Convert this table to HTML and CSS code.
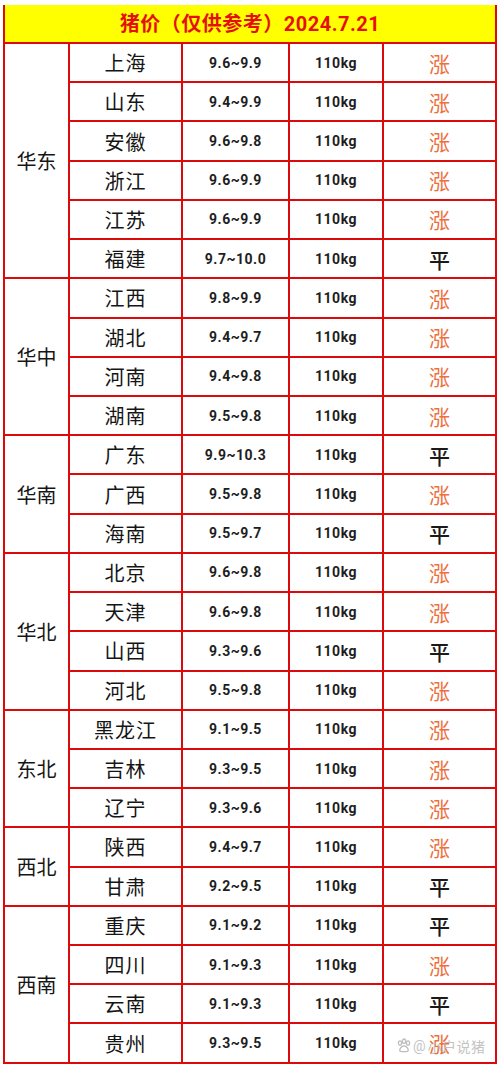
FILE: index.html
```html
<!DOCTYPE html>
<html lang="zh">
<head>
<meta charset="utf-8">
<link rel="stylesheet" href="styles.css">
</head>
<body>
<div class="page">
<table class="price">
<colgroup>
<col class="c1"><col class="c2"><col class="c3"><col class="c4"><col class="c5">
</colgroup>
<thead>
<tr><th colspan="5" class="title">猪价（仅供参考）2024.7.21</th></tr>
</thead>
<tbody>
<tr><td rowspan="6" class="grp">华东</td><td class="pv">上海</td><td class="num">9.6~9.9</td><td class="num">110kg</td><td class="up">涨</td></tr>
<tr><td class="pv">山东</td><td class="num">9.4~9.9</td><td class="num">110kg</td><td class="up">涨</td></tr>
<tr><td class="pv">安徽</td><td class="num">9.6~9.8</td><td class="num">110kg</td><td class="up">涨</td></tr>
<tr><td class="pv">浙江</td><td class="num">9.6~9.9</td><td class="num">110kg</td><td class="up">涨</td></tr>
<tr><td class="pv">江苏</td><td class="num">9.6~9.9</td><td class="num">110kg</td><td class="up">涨</td></tr>
<tr><td class="pv">福建</td><td class="num">9.7~10.0</td><td class="num">110kg</td><td class="flat">平</td></tr>

<tr><td rowspan="4" class="grp">华中</td><td class="pv">江西</td><td class="num">9.8~9.9</td><td class="num">110kg</td><td class="up">涨</td></tr>
<tr><td class="pv">湖北</td><td class="num">9.4~9.7</td><td class="num">110kg</td><td class="up">涨</td></tr>
<tr><td class="pv">河南</td><td class="num">9.4~9.8</td><td class="num">110kg</td><td class="up">涨</td></tr>
<tr><td class="pv">湖南</td><td class="num">9.5~9.8</td><td class="num">110kg</td><td class="up">涨</td></tr>

<tr><td rowspan="3" class="grp">华南</td><td class="pv">广东</td><td class="num">9.9~10.3</td><td class="num">110kg</td><td class="flat">平</td></tr>
<tr><td class="pv">广西</td><td class="num">9.5~9.8</td><td class="num">110kg</td><td class="up">涨</td></tr>
<tr><td class="pv">海南</td><td class="num">9.5~9.7</td><td class="num">110kg</td><td class="flat">平</td></tr>

<tr><td rowspan="4" class="grp">华北</td><td class="pv">北京</td><td class="num">9.6~9.8</td><td class="num">110kg</td><td class="up">涨</td></tr>
<tr><td class="pv">天津</td><td class="num">9.6~9.8</td><td class="num">110kg</td><td class="up">涨</td></tr>
<tr><td class="pv">山西</td><td class="num">9.3~9.6</td><td class="num">110kg</td><td class="flat">平</td></tr>
<tr><td class="pv">河北</td><td class="num">9.5~9.8</td><td class="num">110kg</td><td class="up">涨</td></tr>

<tr><td rowspan="3" class="grp">东北</td><td class="pv">黑龙江</td><td class="num">9.1~9.5</td><td class="num">110kg</td><td class="up">涨</td></tr>
<tr><td class="pv">吉林</td><td class="num">9.3~9.5</td><td class="num">110kg</td><td class="up">涨</td></tr>
<tr><td class="pv">辽宁</td><td class="num">9.3~9.6</td><td class="num">110kg</td><td class="up">涨</td></tr>

<tr><td rowspan="2" class="grp">西北</td><td class="pv">陕西</td><td class="num">9.4~9.7</td><td class="num">110kg</td><td class="up">涨</td></tr>
<tr><td class="pv">甘肃</td><td class="num">9.2~9.5</td><td class="num">110kg</td><td class="flat">平</td></tr>

<tr><td rowspan="4" class="grp">西南</td><td class="pv">重庆</td><td class="num">9.1~9.2</td><td class="num">110kg</td><td class="flat">平</td></tr>
<tr><td class="pv">四川</td><td class="num">9.1~9.3</td><td class="num">110kg</td><td class="up">涨</td></tr>
<tr><td class="pv">云南</td><td class="num">9.1~9.3</td><td class="num">110kg</td><td class="flat">平</td></tr>
<tr><td class="pv">贵州</td><td class="num">9.3~9.5</td><td class="num">110kg</td><td class="up">涨</td></tr>
</tbody>
</table>
<div class="watermark">
<svg class="paw" width="16" height="16" viewBox="0 0 16 16"><g fill="none" stroke="#b8b8b8" stroke-width="1.3"><ellipse cx="4" cy="5" rx="1.6" ry="2.2"/><ellipse cx="8" cy="3.2" rx="1.6" ry="2.2"/><ellipse cx="12" cy="5" rx="1.6" ry="2.2"/><path d="M8 8c-2.5 0-4.8 3-4.2 4.8C4.3 14.2 6.5 13.6 8 13.6s3.7.6 4.2-.8C12.8 11 10.5 8 8 8z"/></g></svg>
<span class="at">@</span><span class="wm-text">小户说猪</span>
</div>
</div>
</body>
</html>
```

FILE: styles.css
```css
html, body {
  margin: 0;
  padding: 0;
  background: #ffffff;
}

.page {
  position: relative;
  width: 500px;
  height: 1070px;
  padding: 5px 0 0 3px;
  box-sizing: border-box;
}

.price {
  border-collapse: collapse;
  table-layout: fixed;
  width: 492px;
  font-family: "Noto Sans CJK SC", "Noto Sans", sans-serif;
  color: #1e1e1e;
}

.c1 { width: 65px; }
.c2 { width: 113px; }
.c3 { width: 107px; }
.c4 { width: 94px; }
.c5 { width: 113px; }

.price td, .price th {
  border: 2px solid #dc0a0a;
  text-align: center;
  vertical-align: middle;
  padding: 0;
}

.price tbody tr {
  height: 39.23px;
}

.price .title {
  height: 37px;
  background: #ffff00;
  color: #e60f0f;
  font-family: "Roboto", "Noto Sans CJK SC", sans-serif;
  font-weight: 700;
  font-size: 20px;
  letter-spacing: 0.5px;
  border-top: 0;
  line-height: 1;
}

.grp {
  font-size: 20px;
  font-weight: 400;
  color: #151515;
}

.pv {
  font-size: 20px;
  font-weight: 400;
  letter-spacing: 1px;
  color: #151515;
}

.num {
  font-family: "Roboto", "Liberation Sans", sans-serif;
  font-weight: 700;
  font-size: 14px;
  letter-spacing: 0.5px;
}

.up {
  color: #ee6f3c;
  font-size: 21px;
  font-weight: 400;
}

.flat {
  color: #1a1a1a;
  font-size: 21px;
  font-weight: 500;
}

.watermark {
  position: absolute;
  left: 396px;
  top: 1036px;
  display: flex;
  align-items: center;
  gap: 1px;
  color: #bdbdbd;
  font-family: "Noto Sans CJK SC", sans-serif;
  font-size: 14px;
  opacity: 0.9;
}

.watermark .at {
  font-family: "Roboto", sans-serif;
  font-size: 14px;
  margin-right: 1px;
}

.watermark .wm-text {
  letter-spacing: 0.5px;
}
```
